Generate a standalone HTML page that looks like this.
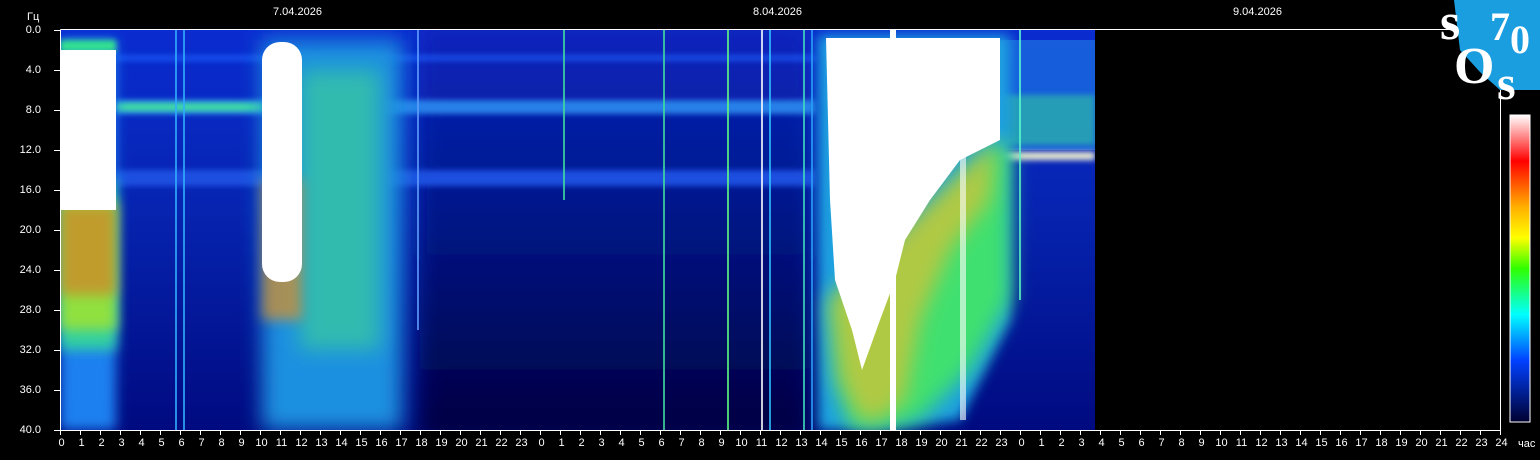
<!DOCTYPE html>
<html><head><meta charset="utf-8"><style>
body{margin:0;background:#000;width:1540px;height:460px;overflow:hidden;position:relative;font-family:"Liberation Sans",sans-serif;color:#fff}
.t{position:absolute;font-size:11px;line-height:12px}
.yl{position:absolute;font-size:11px;right:1499px;text-align:right}
.xl{position:absolute;font-size:11px;width:20px;text-align:center;top:437px}
svg{position:absolute;left:0;top:0}
</style></head><body>
<svg width="1540" height="460" viewBox="0 0 1540 460">
<defs>
<linearGradient id="bg" x1="0" y1="0" x2="0" y2="1">
<stop offset="0" stop-color="#0a2cd0"/><stop offset="0.45" stop-color="#0624b0"/><stop offset="1" stop-color="#000a80"/></linearGradient>
<linearGradient id="mid" x1="0" y1="0" x2="0" y2="1">
<stop offset="0" stop-color="#0a26c0"/><stop offset="0.4" stop-color="#041890"/><stop offset="1" stop-color="#000040"/></linearGradient>
<linearGradient id="cb" x1="0" y1="0" x2="0" y2="1">
<stop offset="0" stop-color="#fff"/><stop offset="0.15" stop-color="#ff0000"/><stop offset="0.3" stop-color="#ffb000"/><stop offset="0.4" stop-color="#ffff00"/><stop offset="0.5" stop-color="#30ff00"/><stop offset="0.65" stop-color="#00ffff"/><stop offset="0.8" stop-color="#0040ff"/><stop offset="1" stop-color="#000030"/></linearGradient>
<filter id="b6" filterUnits="userSpaceOnUse" x="0" y="0" width="1540" height="460"><feGaussianBlur stdDeviation="6"/></filter>
<filter id="b3" filterUnits="userSpaceOnUse" x="0" y="0" width="1540" height="460"><feGaussianBlur stdDeviation="3"/></filter>
<filter id="b10" filterUnits="userSpaceOnUse" x="0" y="0" width="1540" height="460"><feGaussianBlur stdDeviation="10"/></filter>
<clipPath id="plot"><rect x="61" y="30" width="1034" height="400"/></clipPath>
</defs>
<g clip-path="url(#plot)">
<rect x="60" y="30" width="1035" height="400" fill="url(#bg)"/>
<rect x="420" y="20" width="390" height="420" fill="url(#mid)" filter="url(#b10)"/>
<!-- horizontal bands -->
<rect x="115" y="100" width="700" height="14" fill="#2a8cf0" filter="url(#b3)" opacity="0.9"/>
<rect x="115" y="103" width="150" height="8" fill="#40e0a0" filter="url(#b3)"/>
<rect x="115" y="170" width="700" height="16" fill="#1a50e0" filter="url(#b3)"/>
<rect x="115" y="55" width="700" height="6" fill="#1a60ff" filter="url(#b3)" opacity="0.7"/>
<rect x="1000" y="40" width="95" height="110" fill="#1a6ae0" opacity="0.8"/>
<rect x="1000" y="95" width="95" height="50" fill="#30c8a0" opacity="0.6" filter="url(#b3)"/>
<rect x="995" y="152" width="100" height="8" fill="#f0f0d0" filter="url(#b3)"/>
<!-- left block 0-3h -->
<rect x="60" y="40" width="56" height="390" fill="#1a80f0" filter="url(#b6)"/>
<rect x="60" y="180" width="56" height="170" fill="#30d0a0" filter="url(#b6)"/>
<rect x="60" y="200" width="56" height="130" fill="#90e040" filter="url(#b6)"/>
<rect x="60" y="205" width="56" height="90" fill="#e07020" filter="url(#b6)" opacity="0.6"/>
<rect x="60" y="40" width="56" height="12" fill="#30e090" filter="url(#b3)"/>
<rect x="60" y="50" width="56" height="160" fill="#fff"/>
<!-- 10-16h -->
<rect x="262" y="40" width="140" height="390" fill="#1a90e0" filter="url(#b10)"/>
<rect x="300" y="70" width="80" height="280" fill="#40d890" filter="url(#b10)" opacity="0.6"/>
<rect x="262" y="180" width="40" height="140" fill="#e09020" filter="url(#b6)" opacity="0.7"/>
<rect x="262" y="42" width="40" height="240" rx="18" fill="#fff"/>
<!-- vertical lines -->
<g stroke-width="2" opacity="0.8">
<line x1="176" y1="30" x2="176" y2="430" stroke="#30b0ff"/>
<line x1="184" y1="30" x2="184" y2="430" stroke="#30b0ff"/>
<line x1="418" y1="30" x2="418" y2="330" stroke="#60a0ff"/>
<line x1="564" y1="30" x2="564" y2="200" stroke="#40e0a0"/>
<line x1="664" y1="30" x2="664" y2="430" stroke="#40e0a0"/>
<line x1="728" y1="30" x2="728" y2="430" stroke="#60ff80"/>
<line x1="762" y1="30" x2="762" y2="430" stroke="#fff"/>
<line x1="770" y1="30" x2="770" y2="430" stroke="#30c0ff"/>
<line x1="804" y1="30" x2="804" y2="430" stroke="#40e0c0"/>
<line x1="812" y1="30" x2="812" y2="430" stroke="#30a0ff"/>
<line x1="1020" y1="30" x2="1020" y2="300" stroke="#60ffd0"/>
</g>
<!-- big V event -->
<polygon points="818,35 1010,35 1010,320 960,420 880,430 818,430" fill="#1aa0e0" filter="url(#b6)"/>
<polygon points="900,240 995,140 1010,150 1010,300 970,370 920,420 880,430 850,430 835,380 830,300" fill="#40e070" filter="url(#b10)"/>
<polygon points="900,230 995,140 990,200 950,250 920,320 905,400 880,420 860,420 840,380 830,300" fill="#e0c030" filter="url(#b10)" opacity="0.7"/>
<polygon points="826,38 1000,38 1000,140 960,160 930,200 905,240 895,280 880,320 862,370 852,330 835,280 830,200" fill="#fff"/>
<rect x="890" y="30" width="6" height="400" fill="#fff"/>
<rect x="960" y="40" width="6" height="380" fill="#fff" opacity="0.6"/>
</g>
<!-- axes -->
<line x1="60.5" y1="29.5" x2="1501" y2="29.5" stroke="#fff"/>
<line x1="60.5" y1="29.5" x2="60.5" y2="430.5" stroke="#fff"/>
<line x1="60" y1="430.5" x2="1501" y2="430.5" stroke="#fff"/>
<line x1="1500.5" y1="29.5" x2="1500.5" y2="430.5" stroke="#fff"/>
<g stroke="#fff" id="yt"></g>
<g stroke="#fff" id="xt"></g>
<!-- colorbar -->
<rect x="1510" y="115" width="20" height="307" fill="url(#cb)" stroke="#fff"/>
<!-- logo -->
<polygon points="1454,0 1540,0 1540,90 1500,90 1480,72 1460,50" fill="#1a9ee0"/>
<text x="1440" y="39" font-family="Liberation Serif" font-weight="bold" font-size="52" fill="#fff">s</text>
<text x="1490" y="40" font-family="Liberation Serif" font-weight="bold" font-size="40" fill="#fff">7</text>
<text x="1510" y="53" font-family="Liberation Serif" font-weight="bold" font-size="40" fill="#fff">0</text>
<text x="1454" y="83" font-family="Liberation Serif" font-weight="bold" font-size="52" fill="#fff">O</text>
<text x="1497" y="99" font-family="Liberation Serif" font-weight="bold" font-size="48" fill="#fff">s</text>
</svg>
<div class="t" style="left:27px;top:11px">Гц</div>
<div class="t" style="left:273px;top:6px">7.04.2026</div>
<div class="t" style="left:753px;top:6px">8.04.2026</div>
<div class="t" style="left:1233px;top:6px">9.04.2026</div>
<div class="t" style="left:1518px;top:438px">час</div>
<div id="labels"></div>
<script>
var h='';var yt='',xt='';
var yv=['0.0','4.0','8.0','12.0','16.0','20.0','24.0','28.0','32.0','36.0','40.0'];
for(var i=0;i<11;i++){var y=30+i*40;h+='<div class="yl" style="top:'+(y-6)+'px">'+yv[i]+'</div>';yt+='<line x1="54" y1="'+(y+0.5)+'" x2="60" y2="'+(y+0.5)+'"/>';}
for(var i=0;i<=72;i++){var x=60.5+i*20;var n=i%24;if(i==72)n=24;h+='<div class="xl" style="left:'+(x-9)+'px">'+n+'</div>';xt+='<line x1="'+x+'" y1="430" x2="'+x+'" y2="435"/>';}
document.getElementById('labels').innerHTML=h;
document.getElementById('yt').innerHTML=yt;document.getElementById('xt').innerHTML=xt;
</script>
</body></html>
